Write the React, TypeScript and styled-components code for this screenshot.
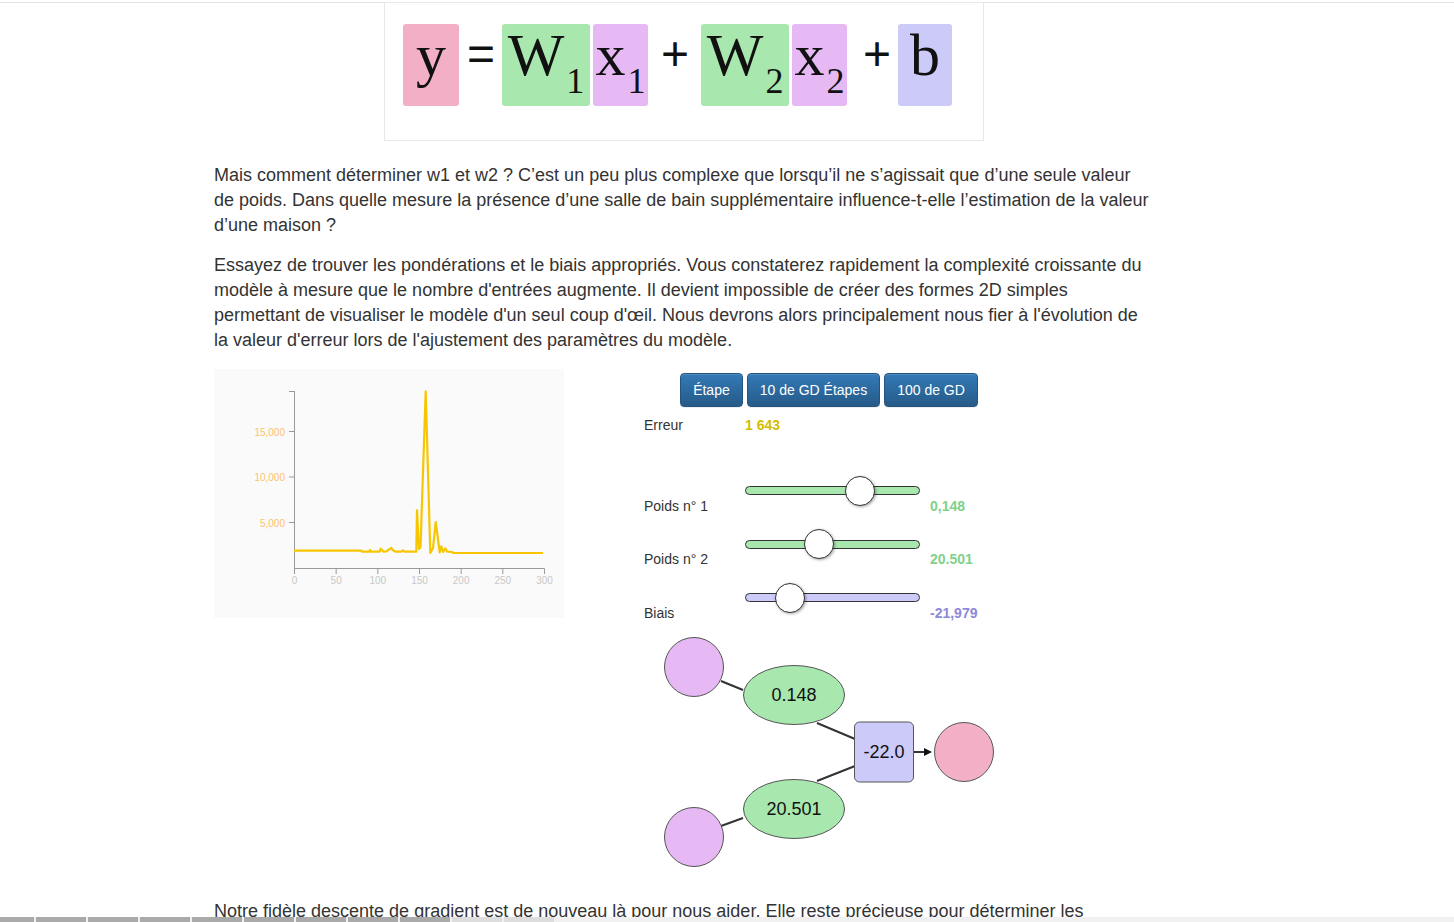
import React from "react";
import styled, { createGlobalStyle } from "styled-components";

const colors = {
  pink: "#f2afc6",
  green: "#a8e7ae",
  violet: "#e6b8f4",
  lavender: "#cccaf8",
  text: "#333",
};

const GlobalStyle = createGlobalStyle`
  html, body {
    margin: 0;
    padding: 0;
    background: #fff;
  }
  body {
    font-family: "Liberation Sans", Arial, sans-serif;
    color: ${colors.text};
  }
`;

const chartPoints: [number, number][] = [
  [80, 181.7], [147.3, 181.7], [148, 182.7], [155, 182.7], [156, 181], [157, 182.7],
  [165.7, 182.7], [166.7, 179.7], [168.3, 181.3], [169.7, 182.7], [172.3, 182.3],
  [177.3, 179], [179, 181.3], [181.7, 182.7], [187.3, 182.7], [189, 181.3],
  [190.7, 182.7], [202.3, 182.7], [203, 141.3], [205, 180], [206.5, 178],
  [211.7, 22.3], [216.3, 184], [219, 179], [221.7, 153], [225.7, 183.3],
  [227.3, 177.3], [229, 183], [231.3, 179.3], [233.3, 182.7], [238.3, 183],
  [239, 184], [329, 184],
];

const sliders = [
  { label: "Poids n° 1", value: "0,148", pos: 114, fill: colors.green, tone: "#7fd18a" },
  { label: "Poids n° 2", value: "20.501", pos: 73, fill: colors.green, tone: "#7fd18a" },
  { label: "Biais", value: "-21,979", pos: 44, fill: colors.lavender, tone: "#8e89d8" },
];

export default function App() {
  return (
    <>
      <GlobalStyle />
      <Page>
        <Column>
          <EquationBox>
            <EquationRow>
              <Tile bg={colors.pink} w={56}>y</Tile>
              <Op left={8} right={7}>=</Op>
              <Tile bg={colors.green} w={88}>
                W<Sub>1</Sub>
              </Tile>
              <Tile bg={colors.violet} w={55} left={3}>
                x<Sub>1</Sub>
              </Tile>
              <Op left={13} right={12}>+</Op>
              <Tile bg={colors.green} w={88}>
                W<Sub>2</Sub>
              </Tile>
              <Tile bg={colors.violet} w={55} left={3}>
                x<Sub>2</Sub>
              </Tile>
              <Op left={16} right={7}>+</Op>
              <Tile bg={colors.lavender} w={54}>b</Tile>
            </EquationRow>
          </EquationBox>

          <Paragraph>
            Mais comment déterminer w1 et w2 ? C’est un peu plus complexe que lorsqu’il ne
            s’agissait que d’une seule valeur de poids. Dans quelle mesure la présence d’une salle
            de bain supplémentaire influence-t-elle l’estimation de la valeur d’une maison ?
          </Paragraph>
          <Paragraph>
            Essayez de trouver les pondérations et le biais appropriés. Vous constaterez rapidement
            la complexité croissante du modèle à mesure que le nombre d'entrées augmente. Il devient
            impossible de créer des formes 2D simples permettant de visualiser le modèle d'un seul
            coup d'œil. Nous devrons alors principalement nous fier à l'évolution de la valeur
            d'erreur lors de l'ajustement des paramètres du modèle.
          </Paragraph>

          <Playground>
            <ChartBox>
              <svg width="350" height="249" viewBox="0 0 350 249">
                <g stroke="#999" strokeWidth="1" fill="none">
                  <line x1="80.5" y1="22" x2="80.5" y2="199.5" />
                  <line x1="80" y1="199.5" x2="330.5" y2="199.5" />
                  <line x1="75" y1="22.5" x2="80" y2="22.5" />
                  {[62.5, 108, 153.5].map((y) => (
                    <line key={y} x1="75" y1={y} x2="80" y2={y} />
                  ))}
                  {[0, 50, 100, 150, 200, 250, 300].map((v) => {
                    const x = 80.5 + (v * 250) / 300;
                    return <line key={v} x1={x} y1="199.5" x2={x} y2="205" />;
                  })}
                </g>
                <g fontFamily="Liberation Sans, Arial, sans-serif" fontSize="10" fill="#fcc26e" textAnchor="end">
                  <text x="71" y="66.5">15,000</text>
                  <text x="71" y="112">10,000</text>
                  <text x="71" y="157.5">5,000</text>
                </g>
                <g fontFamily="Liberation Sans, Arial, sans-serif" fontSize="10" fill="#c8c8c8" textAnchor="middle">
                  {[0, 50, 100, 150, 200, 250, 300].map((v) => (
                    <text key={v} x={80.5 + (v * 250) / 300} y="214.5">
                      {v}
                    </text>
                  ))}
                </g>
                <polyline
                  points={chartPoints.map((p) => p.join(",")).join(" ")}
                  fill="none"
                  stroke="#f7c600"
                  strokeWidth="2.2"
                  strokeLinejoin="round"
                />
              </svg>
            </ChartBox>

            <Panel>
              <ButtonRow>
                <Button>Étape</Button>
                <Button>10 de GD Étapes</Button>
                <Button>100 de GD</Button>
              </ButtonRow>

              <ErrorRow>
                <Label>Erreur</Label>
                <Value tone="#d4bd00">1 643</Value>
              </ErrorRow>

              <Sliders>
                {sliders.map((s) => (
                  <SliderRow key={s.label}>
                    <Label>{s.label}</Label>
                    <SliderCell>
                      <Track fill={s.fill}>
                        <Thumb style={{ left: s.pos }} />
                      </Track>
                    </SliderCell>
                    <Value tone={s.tone}>{s.value}</Value>
                  </SliderRow>
                ))}
              </Sliders>

              <Diagram width="340" height="235" viewBox="0 0 340 235">
                <g stroke="#333" strokeWidth="2">
                  <line x1="61" y1="46" x2="83" y2="55" />
                  <line x1="157" y1="88" x2="195" y2="104" />
                  <line x1="195" y1="131" x2="157" y2="146" />
                  <line x1="83" y1="183" x2="61" y2="191" />
                  <line x1="254" y1="117" x2="266" y2="117" />
                </g>
                <polygon points="264,113 272,117 264,121" fill="#111" />
                <g stroke="#555" strokeWidth="1">
                  <circle cx="34" cy="32" r="29.5" fill={colors.violet} />
                  <circle cx="34" cy="202" r="29.5" fill={colors.violet} />
                  <ellipse cx="134" cy="60" rx="50.5" ry="29.5" fill={colors.green} />
                  <ellipse cx="134" cy="174" rx="50.5" ry="29.5" fill={colors.green} />
                  <rect x="194.5" y="87" width="59" height="60" rx="5" fill={colors.lavender} />
                  <circle cx="304" cy="117" r="29.5" fill={colors.pink} />
                </g>
                <g fontFamily="Liberation Sans, Arial, sans-serif" fontSize="18" fill="#111" textAnchor="middle">
                  <text x="134" y="66">0.148</text>
                  <text x="134" y="180">20.501</text>
                  <text x="224" y="123">-22.0</text>
                </g>
              </Diagram>
            </Panel>
          </Playground>

          <Paragraph>
            Notre fidèle descente de gradient est de nouveau là pour nous aider. Elle reste précieuse
            pour déterminer les meilleures valeurs de pondération et de biais.
          </Paragraph>
        </Column>
      </Page>

      <Progress>
        {Array.from({ length: 11 }).map((_, i) => (
          <Segment key={i} first={i === 0} done={i < 9} />
        ))}
      </Progress>
    </>
  );
}

const Page = styled.div`
  margin-top: 2px;
  border-top: 1px solid #e2e2e2;
  min-height: 960px;
`;

const Column = styled.div`
  margin-left: 214px;
  width: 938px;
`;

const EquationBox = styled.div`
  margin: -1px 0 0 170px;
  width: 600px;
  height: 139px;
  border: 1px solid #e8e8e8;
  padding: 21px 0 0 18px;
  box-sizing: border-box;
`;

const EquationRow = styled.div`
  display: flex;
  align-items: flex-start;
`;

const Tile = styled.div<{ bg: string; w: number; left?: number }>`
  width: ${(p) => p.w}px;
  height: 82px;
  margin-left: ${(p) => p.left ?? 0}px;
  background: ${(p) => p.bg};
  border-radius: 3px;
  font-family: "Liberation Serif", "Times New Roman", serif;
  font-size: 60px;
  line-height: 62px;
  text-align: center;
  color: #111;
  white-space: nowrap;
`;

const Sub = styled.span`
  font-size: 36px;
  line-height: 0;
  vertical-align: -18px;
  margin-left: 2px;
`;

const Op = styled.div<{ left: number; right: number }>`
  margin: 0 ${(p) => p.right}px 0 ${(p) => p.left}px;
  height: 82px;
  font-family: "Liberation Sans", Arial, sans-serif;
  font-size: 48px;
  line-height: 60px;
  color: #111;
`;

const Paragraph = styled.p`
  margin: 22px 0 15px;
  font-size: 18px;
  line-height: 25px;
  & + & {
    margin-top: 0;
  }
`;

const Playground = styled.div`
  display: flex;
  align-items: flex-start;
  margin-top: 16px;
  & + ${Paragraph} {
    margin-top: 29px;
  }
`;

const ChartBox = styled.div`
  width: 350px;
  height: 249px;
  background: #fafafa;
  svg {
    display: block;
  }
`;

const Panel = styled.div`
  width: 370px;
  margin-left: 80px;
  padding-top: 4px;
  display: flex;
  flex-direction: column;
`;

const ButtonRow = styled.div`
  display: flex;
  justify-content: center;
  gap: 4px;
`;

const Button = styled.button`
  font-family: "Liberation Sans", Arial, sans-serif;
  font-size: 14px;
  line-height: 20px;
  padding: 6px 12px;
  color: #fff;
  background: linear-gradient(to bottom, #337ab7 0%, #265a88 100%);
  border: 1px solid #245580;
  border-radius: 4px;
  box-shadow: inset 0 1px 0 rgba(255, 255, 255, 0.15), 0 1px 1px rgba(0, 0, 0, 0.075);
  cursor: pointer;
`;

const ErrorRow = styled.div`
  display: grid;
  grid-template-columns: 101px auto;
  margin-top: 8px;
  line-height: 20px;
`;

const Label = styled.div`
  font-size: 14px;
  line-height: 20px;
  color: #333;
`;

const Value = styled.div<{ tone: string }>`
  font-size: 14px;
  line-height: 20px;
  font-weight: bold;
  color: ${(p) => p.tone};
`;

const Sliders = styled.div`
  margin-top: 27px;
  display: flex;
  flex-direction: column;
`;

const SliderRow = styled.div`
  display: grid;
  grid-template-columns: 91px 175px auto;
  column-gap: 10px;
  height: 53.5px;
  align-items: end;
`;

const SliderCell = styled.div`
  height: 30px;
  margin-bottom: 10px;
  display: flex;
  align-items: center;
`;

const Track = styled.div<{ fill: string }>`
  position: relative;
  width: 100%;
  height: 9px;
  box-sizing: border-box;
  border: 1px solid #333;
  border-radius: 6px;
  background: ${(p) => p.fill};
`;

const Thumb = styled.div`
  position: absolute;
  top: 50%;
  width: 30px;
  height: 30px;
  margin: -15px 0 0 -15px;
  box-sizing: border-box;
  border-radius: 50%;
  background: #fff;
  border: 1px solid #333;
  box-shadow: 1px 1px 3px rgba(0, 0, 0, 0.35);
`;

const Diagram = styled.svg`
  display: block;
  margin: 12px 0 0 16px;
`;

const Progress = styled.div`
  position: fixed;
  left: 0;
  right: 0;
  bottom: 0;
  height: 5px;
  display: flex;
  gap: 2px;
  background: #f0f0f0;
`;

const Segment = styled.div<{ first: boolean; done: boolean }>`
  width: ${(p) => (p.first ? 34 : 50)}px;
  height: 100%;
  background: ${(p) => (p.done ? "#aaa" : "#ddd")};
`;
